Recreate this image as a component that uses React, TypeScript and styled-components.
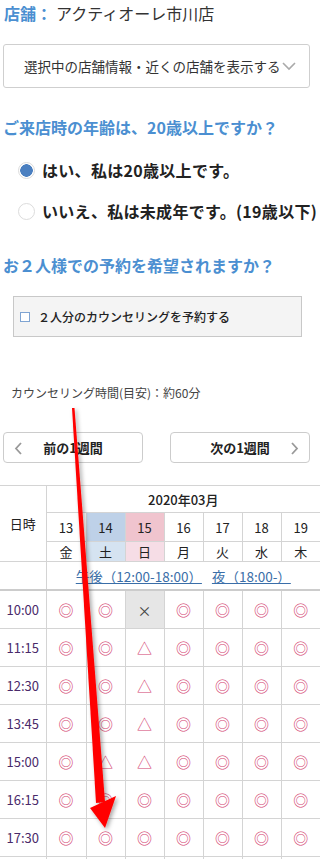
import * as React from 'react';
import styled, { createGlobalStyle } from 'styled-components';

const GlobalStyle = createGlobalStyle`
  body {
    margin: 0;
    overflow-x: hidden;
    background: #fff;
    font-family: "Noto Sans CJK JP", "Noto Sans", sans-serif;
    color: #333;
  }
`;

// ── Layout ─────────────────────────────
const Page = styled.div`
  position: relative;
  width: 320px;
`;

const Section = styled.div`
  padding: 0 10px 0 3px;
`;

const StoreLine = styled.div`
  font-size: 16px;
  line-height: 26px;
  padding-left: 1px;
  white-space: nowrap;
`;

const StoreLabel = styled.span`
  color: #4b8fd1;
  font-weight: bold;
  margin-right: 4px;
`;

const SelectBox = styled.div`
  margin-top: 18px;
  height: 44px;
  box-sizing: border-box;
  border: 1px solid #cfcfcf;
  border-radius: 3px;
  display: flex;
  align-items: center;
  padding-left: 20px;
  font-size: 13.5px;
  color: #333;
  white-space: nowrap;
  overflow: hidden;
`;

const Heading = styled.h2<{ $top: number }>`
  margin: ${({ $top }) => $top}px 0 0;
  font-size: 16px;
  line-height: 24px;
  font-weight: bold;
  color: #4b8fd1;
  white-space: nowrap;
`;

const RadioList = styled.div`
  margin-top: 19px;
  padding-left: 15px;
  display: flex;
  flex-direction: column;
  gap: 17px;
`;

const RadioRow = styled.label`
  display: flex;
  align-items: center;
  gap: 7px;
  height: 24px;
  font-size: 16px;
  letter-spacing: 0.3px;
  font-weight: bold;
  color: #222;
  white-space: nowrap;
`;

const RadioDot = styled.span<{ $checked: boolean }>`
  flex: none;
  width: 17px;
  height: 17px;
  box-sizing: border-box;
  border-radius: 50%;
  border: 1px solid #dcdcdc;
  background: ${({ $checked }) =>
    $checked ? 'radial-gradient(circle, #4a7fc0 0 6px, #fff 6.5px)' : '#fff'};
`;

const CheckPanel = styled.div`
  margin: 19px 8px 0 10px;
  height: 41px;
  box-sizing: border-box;
  border: 1px solid #c8c8c8;
  background: #f4f4f4;
  display: flex;
  align-items: center;
  padding-left: 6px;
  gap: 6px;
  font-size: 12px;
  font-weight: 500;
  color: #222;
  white-space: nowrap;
`;

const CheckSquare = styled.span`
  width: 8px;
  height: 8px;
  border: 1px solid #7fa4d2;
  background: #fff;
  margin-right: 2px;
`;

const Duration = styled.p`
  margin: 47px 0 0 8px;
  font-size: 12px;
  line-height: 18px;
  color: #444;
`;

const WeekNav = styled.div`
  margin-top: 30px;
  display: flex;
  justify-content: space-between;
`;

const WeekButton = styled.button`
  position: relative;
  width: 140px;
  height: 31px;
  border: 1px solid #cccccc;
  border-radius: 4px;
  background: #fff;
  font-family: inherit;
  font-size: 13px;
  font-weight: bold;
  color: #222;
  padding: 0;
  display: flex;
  align-items: center;
  justify-content: center;
`;

const Chevron = styled.svg<{ $side: 'left' | 'right' }>`
  position: absolute;
  top: 9px;
  ${({ $side }) => ($side === 'left' ? 'left: 10px;' : 'right: 10px;')}
`;

// ── Table ─────────────────────────────
const Calendar = styled.table`
  margin-top: 22px;
  width: 320px;
  table-layout: fixed;
  border-collapse: collapse;
  font-size: 13px;
  color: #222;
`;

const Cell = styled.td<{ $bg?: string; $h: number }>`
  height: ${({ $h }) => $h}px;
  padding: 0;
  text-align: center;
  border: 1px solid #d4d4d4;
  background: ${({ $bg }) => $bg || 'transparent'};
  &:first-child {
    border-left: none;
  }
  &:last-child {
    border-right: none;
  }
`;

const MonthCell = styled(Cell)`
  font-weight: 500;
`;

const LinkCell = styled(Cell)`
  border-bottom: 2px solid #cccccc;
  white-space: nowrap;
`;

const SlotLink = styled.a`
  color: #3a6ea8;
  font-size: 13.5px;
  text-decoration: underline;
  margin: 0 5px;
`;

const TimeCell = styled(Cell)`
  color: #4a2a6a;
  font-size: 13px;
`;

const Mark = styled.span<{ $kind: string }>`
  font-size: ${({ $kind }) => ($kind === '×' ? '14px' : '15px')};
  color: ${({ $kind }) => ($kind === '×' ? '#444' : '#d3416f')};
`;

const Arrow = styled.svg`
  position: absolute;
  left: 0;
  top: 0;
  pointer-events: none;
`;

const days = [
  { d: 13, w: '金' },
  { d: 14, w: '土', top: '#bed1e8', bottom: '#d5e3f1' },
  { d: 15, w: '日', top: '#f0c4ce', bottom: '#f6dde6' },
  { d: 16, w: '月' },
  { d: 17, w: '火' },
  { d: 18, w: '水' },
  { d: 19, w: '木' },
];

const rows: [string, string][] = [
  ['10:00', '◎◎×◎◎◎◎'],
  ['11:15', '◎◎△◎◎◎◎'],
  ['12:30', '◎◎△◎◎◎◎'],
  ['13:45', '◎◎△◎◎◎◎'],
  ['15:00', '◎△△◎◎◎◎'],
  ['16:15', '◎◎◎◎◎◎◎'],
  ['17:30', '◎◎◎◎◎◎◎'],
];

// ── Component ─────────────────────────────
export default function App(): React.ReactElement {
  return (
    <Page>
      <GlobalStyle />
      <Section>
        <StoreLine>
          <StoreLabel>店舗：</StoreLabel>アクティオーレ市川店
        </StoreLine>

        <SelectBox>
          選択中の店舗情報・近くの店舗を表示する
          <svg width="16" height="10" viewBox="0 0 16 10" style={{ flex: 'none' }}>
            <path d="M2 2L8 8L14 2" stroke="#aaa" strokeWidth="1.6" fill="none" />
          </svg>
        </SelectBox>

        <Heading $top={27}>ご来店時の年齢は、20歳以上ですか？</Heading>

        <RadioList>
          <RadioRow>
            <RadioDot $checked />
            はい、私は20歳以上です。
          </RadioRow>
          <RadioRow>
            <RadioDot $checked={false} />
            いいえ、私は未成年です。(19歳以下)
          </RadioRow>
        </RadioList>

        <Heading $top={30}>お２人様での予約を希望されますか？</Heading>

        <CheckPanel>
          <CheckSquare />
          ２人分のカウンセリングを予約する
        </CheckPanel>

        <Duration>カウンセリング時間(目安)：約60分</Duration>

        <WeekNav>
          <WeekButton>
            <Chevron $side="left" width="8" height="13" viewBox="0 0 8 13">
              <path d="M7 1L2 6.5L7 12" stroke="#999" strokeWidth="1.8" fill="none" />
            </Chevron>
            前の1週間
          </WeekButton>
          <WeekButton>
            次の1週間
            <Chevron $side="right" width="8" height="13" viewBox="0 0 8 13">
              <path d="M1 1L6 6.5L1 12" stroke="#999" strokeWidth="1.8" fill="none" />
            </Chevron>
          </WeekButton>
        </WeekNav>
      </Section>

      <Calendar>
        <colgroup>
          <col style={{ width: 46 }} />
          <col style={{ width: 40 }} />
          {days.slice(1).map((d) => (
            <col key={d.d} style={{ width: 39 }} />
          ))}
        </colgroup>
        <tbody>
          <tr>
            <Cell $h={26} rowSpan={3}>日時</Cell>
            <MonthCell $h={26} colSpan={7}>2020年03月</MonthCell>
          </tr>
          <tr>
            {days.map((d) => (
              <Cell key={d.d} $h={28} $bg={d.top}>{d.d}</Cell>
            ))}
          </tr>
          <tr>
            {days.map((d) => (
              <Cell key={d.w} $h={18} $bg={d.bottom}>{d.w}</Cell>
            ))}
          </tr>
          <tr>
            <LinkCell $h={27} />
            <LinkCell $h={27} colSpan={7}>
              <SlotLink>午後（12:00-18:00）</SlotLink>
              <SlotLink>夜（18:00-）</SlotLink>
            </LinkCell>
          </tr>
          {rows.map(([time, marks]) => (
            <tr key={time}>
              <TimeCell $h={37}>{time}</TimeCell>
              {Array.from(marks).map((m, i) => (
                <Cell key={i} $h={37} $bg={m === '×' ? '#e6e6e6' : undefined}>
                  <Mark $kind={m}>{m}</Mark>
                </Cell>
              ))}
            </tr>
          ))}
          <tr>
            {days.concat(days[0]).map((_, i) => (
              <Cell key={i} $h={37} />
            ))}
          </tr>
        </tbody>
      </Calendar>

      <Arrow width="320" height="859" viewBox="0 0 320 859">
        <defs>
          <filter id="shadow" x="-50%" y="-10%" width="200%" height="120%">
            <feDropShadow dx="2" dy="2" stdDeviation="2" floodColor="#000" floodOpacity="0.35" />
          </filter>
        </defs>
        <g filter="url(#shadow)" fill="#ff0000">
          <polygon points="72,408 74.5,408 105,802 96,803" />
          <polygon points="90,808 116,796 105,828" />
        </g>
      </Arrow>
    </Page>
  );
}
